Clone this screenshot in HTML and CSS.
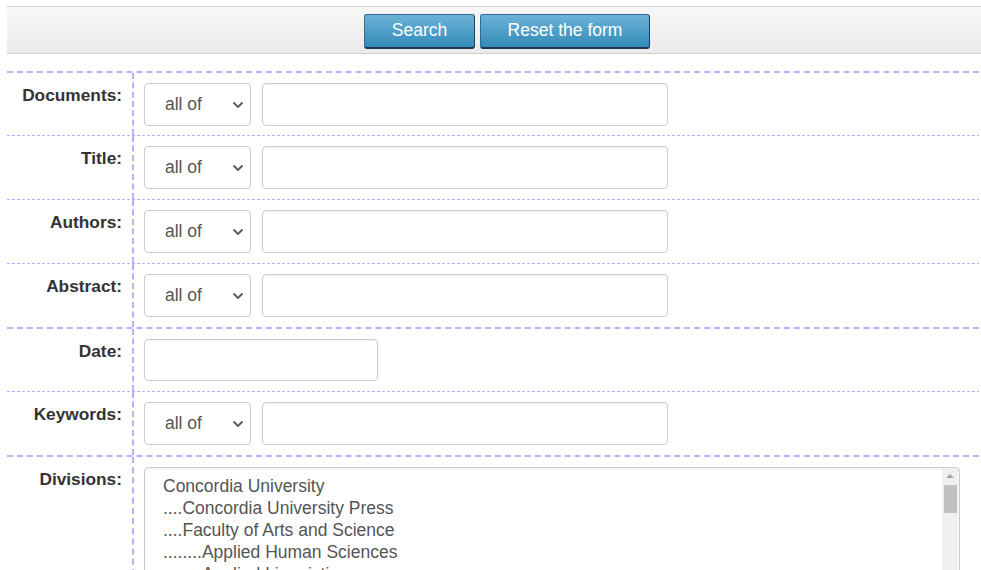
FILE: index.html
```html
<!DOCTYPE html>
<html>
<head>
<meta charset="utf-8">
<link rel="stylesheet" href="styles.css">
</head>
<body>
<div class="page">
  <div class="toolbar">
    <button class="btn">Search</button>
    <button class="btn">Reset the form</button>
  </div>
  <div class="form">
    <div class="row thick">
      <div class="label">Documents:</div>
      <div class="field">
        <div class="select"><span>all of</span><svg width="12" height="8" viewBox="0 0 12 8"><path d="M1.5 1.5 L6 6 L10.5 1.5" fill="none" stroke="#555" stroke-width="1.8"/></svg></div>
        <div class="input"></div>
      </div>
    </div>
    <div class="row thin">
      <div class="label">Title:</div>
      <div class="field">
        <div class="select"><span>all of</span><svg width="12" height="8" viewBox="0 0 12 8"><path d="M1.5 1.5 L6 6 L10.5 1.5" fill="none" stroke="#555" stroke-width="1.8"/></svg></div>
        <div class="input"></div>
      </div>
    </div>
    <div class="row thin">
      <div class="label">Authors:</div>
      <div class="field">
        <div class="select"><span>all of</span><svg width="12" height="8" viewBox="0 0 12 8"><path d="M1.5 1.5 L6 6 L10.5 1.5" fill="none" stroke="#555" stroke-width="1.8"/></svg></div>
        <div class="input"></div>
      </div>
    </div>
    <div class="row thin">
      <div class="label">Abstract:</div>
      <div class="field">
        <div class="select"><span>all of</span><svg width="12" height="8" viewBox="0 0 12 8"><path d="M1.5 1.5 L6 6 L10.5 1.5" fill="none" stroke="#555" stroke-width="1.8"/></svg></div>
        <div class="input"></div>
      </div>
    </div>
    <div class="row thick">
      <div class="label">Date:</div>
      <div class="field">
        <div class="input date"></div>
      </div>
    </div>
    <div class="row thin">
      <div class="label">Keywords:</div>
      <div class="field">
        <div class="select"><span>all of</span><svg width="12" height="8" viewBox="0 0 12 8"><path d="M1.5 1.5 L6 6 L10.5 1.5" fill="none" stroke="#555" stroke-width="1.8"/></svg></div>
        <div class="input"></div>
      </div>
    </div>
    <div class="row thick last">
      <div class="label">Divisions:</div>
      <div class="field">
        <div class="listbox">
          <div class="options">
            <div>Concordia University</div>
            <div>....Concordia University Press</div>
            <div>....Faculty of Arts and Science</div>
            <div>........Applied Human Sciences</div>
            <div>........Applied Linguistics</div>
          </div>
          <div class="scrollbar">
            <div class="arrow"></div>
            <div class="thumb"></div>
          </div>
        </div>
      </div>
    </div>
  </div>
</div>
</body>
</html>
```
FILE: styles.css
```css
html, body {
  margin: 0;
  padding: 0;
  overflow: hidden;
  background: #fff;
  font-family: "Liberation Sans", Arial, sans-serif;
}
.page {
  padding: 6px 0 0 7px;
}
.toolbar {
  width: 1000px;
  height: 46px;
  border-top: 1px solid #cfcfcf;
  border-bottom: 1px solid #cfcfcf;
  background: linear-gradient(#f7f7f7, #ebebeb);
  display: flex;
  justify-content: center;
  align-items: center;
  gap: 5px;
}
.btn {
  height: 35px;
  padding: 0;
  border: 1px solid #2f6d98;
  border-bottom: 2px solid #1c3550;
  border-right-color: #1f3d5c;
  border-radius: 3px;
  background: linear-gradient(#6db2d7, #338ab9);
  color: #fff;
  font-family: "Liberation Sans", Arial, sans-serif;
  font-size: 17.5px;
  line-height: 1;
  margin-top: 2px;
}
.btn:first-child {
  width: 111px;
}
.btn:last-child {
  width: 170px;
}
.form {
  width: 972px;
  margin-top: 17px;
}
.row {
  display: flex;
  height: 64px;
  box-sizing: border-box;
}
.row.thin {
  padding-top: 1px;
  background-image: repeating-linear-gradient(90deg, #b3b3fd 0 3px, transparent 3px 5px);
  background-size: 100% 1px;
  background-repeat: no-repeat;
  background-position: 0 0;
}
.row.thick {
  border-top: 2px dashed #b4b4fb;
}
.row.last {
  height: 120px;
}
.label {
  width: 127px;
  flex: none;
  box-sizing: border-box;
  border-right: 2px dashed #b4b4fb;
  text-align: right;
  padding: 12px 10px 0 0;
  font-weight: bold;
  font-size: 17.3px;
  color: #333;
}
.field {
  display: flex;
  gap: 11px;
  padding: 10px 0 0 10px;
  align-items: flex-start;
}
.select {
  width: 107px;
  height: 43px;
  box-sizing: border-box;
  border: 1px solid #ccc;
  border-radius: 4px;
  display: flex;
  align-items: center;
  justify-content: space-between;
  padding: 0 6px 0 20px;
  font-size: 17.5px;
  color: #555;
}
.select svg {
  margin-top: 1px;
}
.input {
  width: 406px;
  height: 43px;
  box-sizing: border-box;
  border: 1px solid #ccc;
  border-radius: 4px;
  box-shadow: inset 0 1px 1px rgba(0,0,0,0.06);
}
.input.date {
  width: 234px;
  height: 42px;
}
.listbox {
  width: 816px;
  height: 200px;
  box-sizing: border-box;
  border: 1px solid #ccc;
  border-radius: 4px 4px 0 0;
  box-shadow: inset 0 1px 2px rgba(0,0,0,0.08);
  display: flex;
  justify-content: space-between;
  overflow: hidden;
}
.options {
  padding: 7px 0 0 18px;
  font-size: 17.5px;
  line-height: 22px;
  color: #555;
}
.scrollbar {
  width: 16px;
  background: #f0f0f0;
  margin-right: 1px;
  display: flex;
  flex-direction: column;
  align-items: center;
}
.arrow {
  margin-top: 6px;
  width: 0;
  height: 0;
  border-left: 4px solid transparent;
  border-right: 4px solid transparent;
  border-bottom: 4px solid #a3a3a3;
}
.thumb {
  margin-top: 7px;
  width: 13px;
  height: 28px;
  background: #c1c1c1;
}
```
